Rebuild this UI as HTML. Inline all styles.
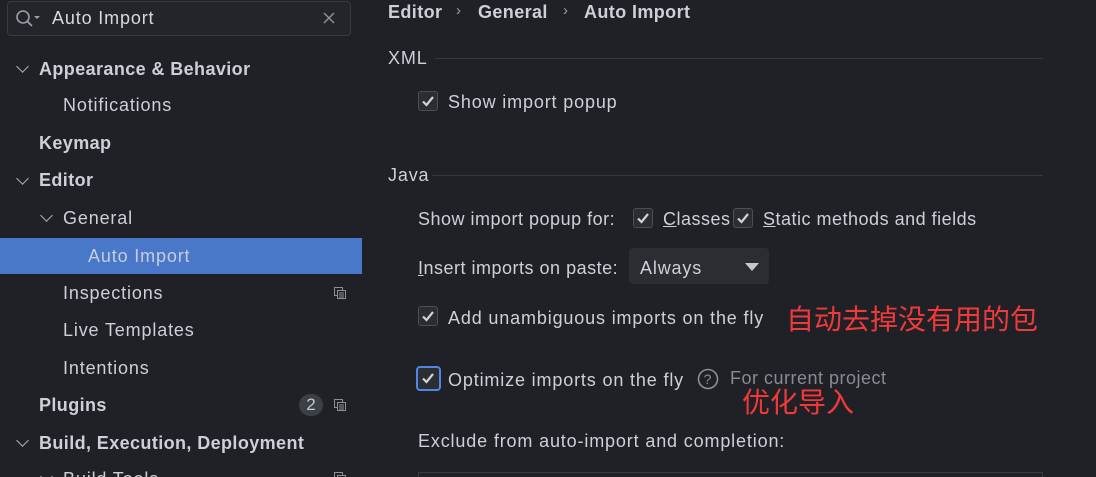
<!DOCTYPE html>
<html><head><meta charset="utf-8"><style>
*{margin:0;padding:0;box-sizing:border-box}
html,body{width:1096px;height:477px;overflow:hidden}
body{background:#1f2127;font-family:"Liberation Sans","Noto Sans CJK SC",sans-serif;font-size:18px;color:#ccd0d8;position:relative;letter-spacing:0.85px}
.a{position:absolute;white-space:nowrap;line-height:22px}
.b{font-weight:bold;letter-spacing:0.4px}
.chev{position:absolute;width:9px;height:9px;border-right:1.6px solid #aab0b8;border-bottom:1.6px solid #aab0b8;transform:rotate(45deg)}
.cb{position:absolute;width:20px;height:20px;border:1px solid #4b4e55;border-radius:3px;background:#2b2d33}
.cb svg{position:absolute;left:2px;top:2px}
.line{position:absolute;height:1px;background:#363941}
.ic{position:absolute;width:12px;height:12px}
.red{color:#f03a3a;font-size:28px;line-height:30px;letter-spacing:0}
.n{letter-spacing:0.5px}
u{text-decoration:underline}
</style></head><body>
<div style="position:absolute;left:7px;top:1px;width:344px;height:35px;border:1px solid #393b42;border-radius:4px;background:#23252b"></div>
<svg style="position:absolute;left:15px;top:9px" width="26" height="20" viewBox="0 0 26 20"><circle cx="8" cy="8" r="6" fill="none" stroke="#9aa0a8" stroke-width="1.6"/><line x1="12.5" y1="12.5" x2="17" y2="17" stroke="#9aa0a8" stroke-width="1.8"/><path d="M19 7 L25 7 L22 10 Z" fill="#9aa0a8"/></svg>
<div class="a" style="left:52px;top:7px;color:#d6d9df">Auto Import</div>
<svg style="position:absolute;left:323px;top:12px" width="12" height="12"><path d="M1 1L11 11M11 1L1 11" stroke="#8a8f96" stroke-width="1.5"/></svg>
<div class="chev" style="left:18px;top:62px"></div>
<div class="a b" style="left:39px;top:58px">Appearance &amp; Behavior</div>
<div class="a" style="left:63px;top:94px">Notifications</div>
<div class="a b" style="left:39px;top:132px">Keymap</div>
<div class="chev" style="left:18px;top:174px"></div>
<div class="a b" style="left:39px;top:169px">Editor</div>
<div class="chev" style="left:42px;top:211px"></div>
<div class="a" style="left:63px;top:207px">General</div>
<div style="position:absolute;left:0;top:238px;width:362px;height:36px;background:#4a78c8"></div>
<div class="a" style="left:88px;top:245px;color:#c4cde0">Auto Import</div>
<div class="a" style="left:63px;top:282px">Inspections</div>
<div class="a" style="left:63px;top:319px">Live Templates</div>
<div class="a" style="left:63px;top:357px">Intentions</div>
<div class="a b" style="left:39px;top:394px">Plugins</div>
<div style="position:absolute;left:299px;top:394px;width:24px;height:22px;border-radius:11px;background:#3c3f46;color:#c4c8d0;text-align:center;line-height:22px;font-size:17px;letter-spacing:0">2</div>
<div class="chev" style="left:18px;top:436px"></div>
<div class="a b" style="left:39px;top:432px">Build, Execution, Deployment</div>
<div class="chev" style="left:42px;top:472px"></div>
<div class="a" style="left:63px;top:468px">Build Tools</div>
<svg class="ic" style="left:334px;top:287px" viewBox="0 0 12 12"><rect x="0.5" y="0.5" width="8" height="8" fill="none" stroke="#8a8f96"/><rect x="3.5" y="3.5" width="8" height="8" fill="#1f2127" stroke="#8a8f96"/><path d="M5 6h5M5 8h5M5 10h5" stroke="#8a8f96"/></svg>
<svg class="ic" style="left:334px;top:399px" viewBox="0 0 12 12"><rect x="0.5" y="0.5" width="8" height="8" fill="none" stroke="#8a8f96"/><rect x="3.5" y="3.5" width="8" height="8" fill="#1f2127" stroke="#8a8f96"/><path d="M5 6h5M5 8h5M5 10h5" stroke="#8a8f96"/></svg>
<svg class="ic" style="left:334px;top:472px" viewBox="0 0 12 12"><rect x="0.5" y="0.5" width="8" height="8" fill="none" stroke="#8a8f96"/><rect x="3.5" y="3.5" width="8" height="8" fill="#1f2127" stroke="#8a8f96"/></svg>
<div class="a b" style="left:388px;top:1px">Editor</div>
<div class="a" style="left:456px;top:0px;color:#9aa0a8;font-size:15px">›</div>
<div class="a b" style="left:478px;top:1px">General</div>
<div class="a" style="left:563px;top:0px;color:#9aa0a8;font-size:15px">›</div>
<div class="a b" style="left:584px;top:1px">Auto Import</div>
<div class="a" style="left:388px;top:47px">XML</div>
<div class="line" style="left:435px;top:58px;width:608px"></div>
<div class="cb" style="left:418px;top:91px"><svg width="14" height="14"><path d="M2 7.5L5.5 11L12 3" fill="none" stroke="#d0d3da" stroke-width="2.2"/></svg></div>
<div class="a" style="left:448px;top:91px">Show import popup</div>
<div class="a" style="left:388px;top:164px">Java</div>
<div class="line" style="left:432px;top:175px;width:611px"></div>
<div class="a n" style="left:418px;top:208px">Show import popup for:</div>
<div class="cb" style="left:633px;top:208px"><svg width="14" height="14"><path d="M2 7.5L5.5 11L12 3" fill="none" stroke="#d0d3da" stroke-width="2.2"/></svg></div>
<div class="a n" style="left:663px;top:208px"><u>C</u>lasses</div>
<div class="cb" style="left:733px;top:208px"><svg width="14" height="14"><path d="M2 7.5L5.5 11L12 3" fill="none" stroke="#d0d3da" stroke-width="2.2"/></svg></div>
<div class="a n" style="left:763px;top:208px"><u>S</u>tatic methods and fields</div>
<div class="a n" style="left:418px;top:257px"><u>I</u>nsert imports on paste:</div>
<div style="position:absolute;left:629px;top:248px;width:140px;height:36px;background:#2b2d33;border-radius:4px"></div>
<div class="a" style="left:640px;top:257px">Always</div>
<svg style="position:absolute;left:745px;top:263px" width="14" height="8"><path d="M0 0H14L7 8Z" fill="#c4c8d0"/></svg>
<div class="cb" style="left:418px;top:306px"><svg width="14" height="14"><path d="M2 7.5L5.5 11L12 3" fill="none" stroke="#d0d3da" stroke-width="2.2"/></svg></div>
<div class="a" style="left:448px;top:307px">Add unambiguous imports on the fly</div>
<div class="a red" style="left:786px;top:305px">自动去掉没有用的包</div>
<div class="cb" style="left:416px;top:366px;width:25px;height:25px;border:2px solid #4f86e8;border-radius:4px"><svg style="left:3px;top:3px" width="14" height="14"><path d="M2 7.5L5.5 11L12 3" fill="none" stroke="#d0d3da" stroke-width="2.2"/></svg></div>
<div class="a" style="left:448px;top:369px">Optimize imports on the fly</div>
<svg style="position:absolute;left:697px;top:368px" width="22" height="22"><circle cx="11" cy="11" r="9.5" fill="none" stroke="#8a8f96" stroke-width="1.6"/><text x="11" y="16" text-anchor="middle" font-family="Liberation Sans" font-size="14" fill="#8a8f96">?</text></svg>
<div class="a n" style="left:730px;top:367px;color:#878c94">For current project</div>
<div class="a red" style="left:742px;top:388px">优化导入</div>
<div class="a" style="left:418px;top:430px">Exclude from auto-import and completion:</div>
<div style="position:absolute;left:418px;top:472px;width:625px;height:10px;border:1px solid #393b42"></div>
</body></html>
